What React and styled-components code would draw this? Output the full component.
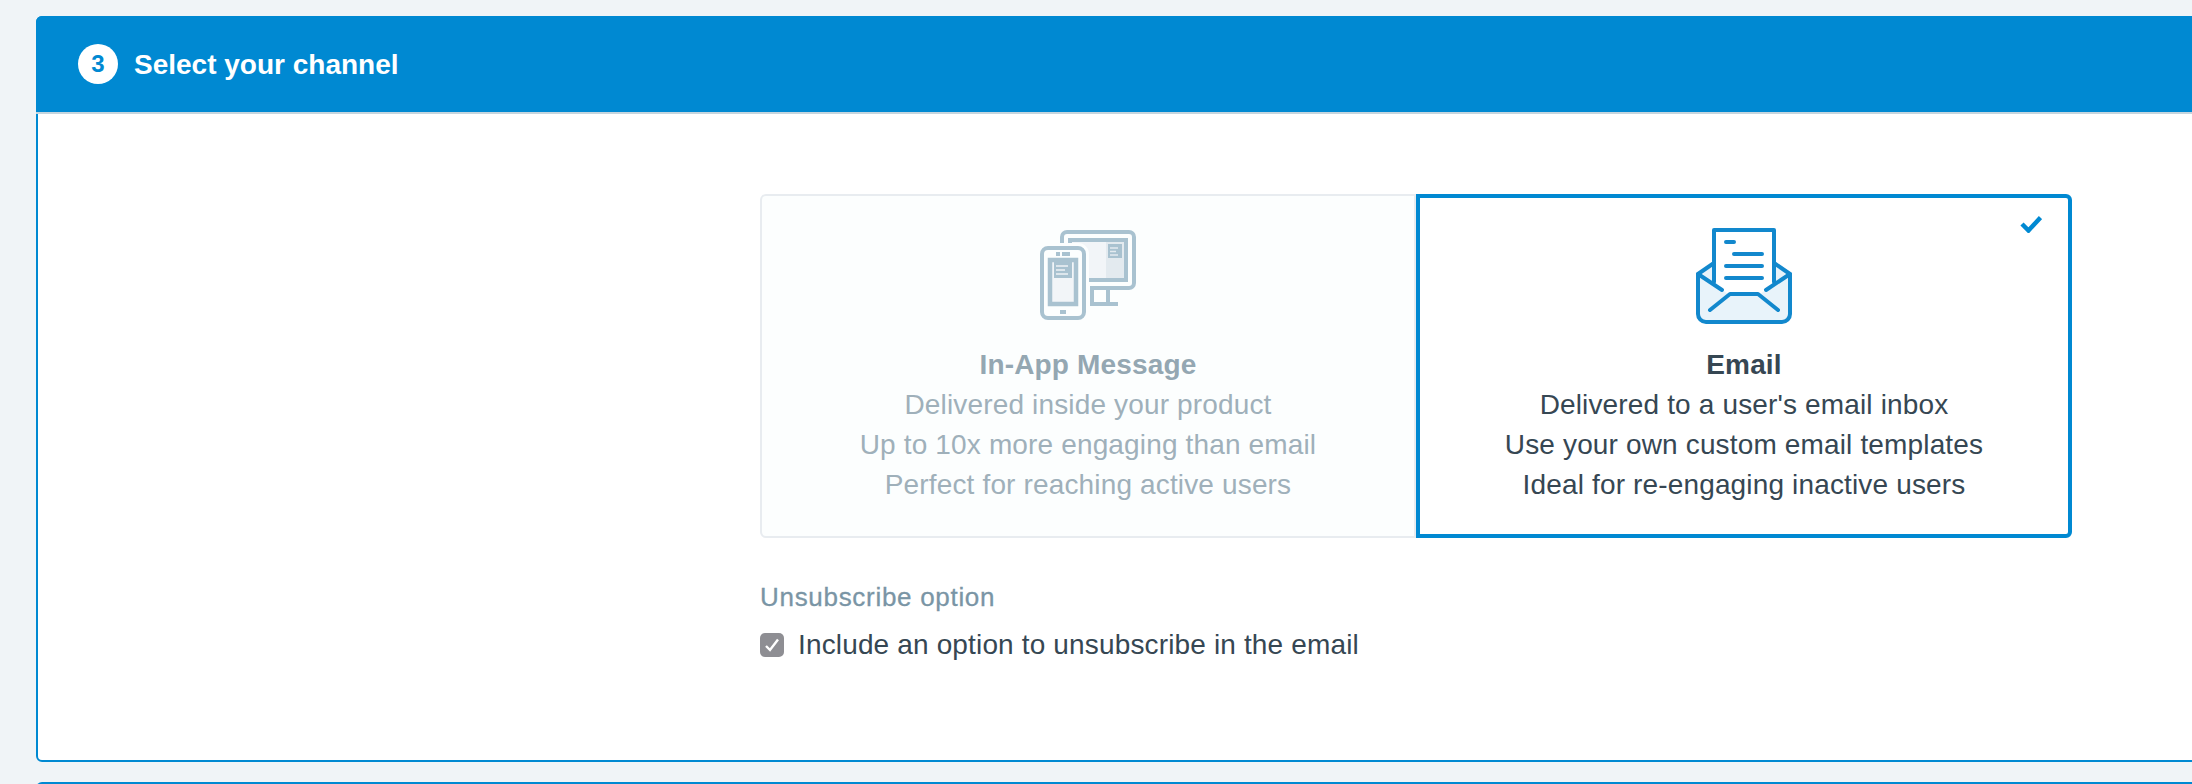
import React from 'react';
import styled, { createGlobalStyle } from 'styled-components';

const GlobalStyle = createGlobalStyle`
  html, body {
    margin: 0;
    height: 100%;
    overflow: hidden;
    background: #f0f4f7;
    font-family: "Liberation Sans", Arial, sans-serif;
  }
`;

const Page = styled.div`
  padding: 16px 0 0 36px;
  display: flex;
  flex-direction: column;
  gap: 20px;
`;

const Panel = styled.section`
  margin-right: -10px;
  background: #fff;
  border: 2px solid #0089d2;
  border-radius: 6px;
  box-sizing: border-box;
`;

const PanelHeader = styled.header`
  height: 98px;
  margin: -2px -2px 0;
  padding: 0 42px;
  box-sizing: border-box;
  background: #0089d2;
  border-bottom: 2px solid #c5d5de;
  border-radius: 6px 6px 0 0;
  display: flex;
  align-items: center;
  gap: 16px;
`;

const StepNumber = styled.span`
  width: 40px;
  height: 40px;
  border-radius: 50%;
  background: #fff;
  color: #0089d2;
  font-size: 24px;
  font-weight: 700;
  display: flex;
  align-items: center;
  justify-content: center;
`;

const PanelTitle = styled.h2`
  margin: 2px 0 0;
  color: #fff;
  font-size: 28px;
  font-weight: 700;
`;

const PanelBody = styled.div`
  height: 646px;
  padding: 80px 0 0 722px;
  box-sizing: border-box;
`;

const Cards = styled.div`
  display: flex;
  width: 1312px;
`;

const Card = styled.div`
  position: relative;
  width: 656px;
  height: 344px;
  box-sizing: border-box;
  padding-top: ${p => (p.$selected ? '30px' : '32px')};
  text-align: center;
  font-size: 28px;
  line-height: 40px;
  letter-spacing: 0.15px;
  color: ${p => (p.$selected ? '#364753' : '#9fb0ba')};
  background: ${p => (p.$selected ? '#fff' : '#fcfefe')};
  border: ${p => (p.$selected ? '4px solid #0089d2' : '2px solid #e8ecf0')};
  border-radius: ${p => (p.$selected ? '0 6px 6px 0' : '6px 0 0 6px')};
`;

const IconSlot = styled.div`
  height: 96px;
  margin-bottom: 21px;
  display: flex;
  justify-content: center;
  align-items: flex-start;
  svg {
    display: block;
    margin: ${p => (p.$nudge ? '2px 0 0 2px' : '0')};
  }
`;

const CardTitle = styled.div`
  font-weight: 700;
  color: ${p => (p.$selected ? '#364753' : '#94a7b2')};
`;

const CheckMark = styled.svg`
  position: absolute;
  top: 17px;
  right: 26px;
`;

const OptionLabel = styled.div`
  margin-top: 44px;
  font-size: 26px;
  line-height: 30px;
  letter-spacing: 0.7px;
  -webkit-text-stroke: 0.3px #7a95a5;
  color: #7a95a5;
`;

const OptionRow = styled.label`
  margin-top: 17px;
  display: flex;
  align-items: center;
  gap: 14px;
  font-size: 28px;
  line-height: 32px;
  letter-spacing: 0.15px;
  color: #364753;
`;

const FakeCheckbox = styled.span`
  width: 24px;
  height: 24px;
  border-radius: 5px;
  background: #8e8e93;
  display: flex;
  align-items: center;
  justify-content: center;
`;

const NextPanel = styled.div`
  height: 40px;
  margin-right: -10px;
  background: #0089d2;
  border-radius: 6px 6px 0 0;
`;

const DevicesIcon = () => (
  <svg width="98" height="92" viewBox="0 0 98 92" fill="none">
    <path d="M22 14V7a5 5 0 0 1 5-5h62a5 5 0 0 1 5 5v46a5 5 0 0 1-5 5H50" stroke="#a9c2d0" strokeWidth="4" />
    <rect x="30" y="10" width="56" height="40" fill="#f2f5f8" stroke="#a9c2d0" strokeWidth="4" />
    <rect x="66" y="12" width="18" height="36" fill="#e3eaef" />
    <rect x="68" y="14" width="14" height="14" fill="#a9c2d0" />
    <path d="M70 18h8M70 21.500h6M70 25h8" stroke="#e3eaef" strokeWidth="1.3" />
    <path d="M52 58v16h26M68 58v16" stroke="#a9c2d0" strokeWidth="4" />
    <rect x="2" y="18" width="42" height="70" rx="6" fill="#fcfefe" stroke="#fcfefe" strokeWidth="10" />
    <rect x="2" y="18" width="42" height="70" rx="6" fill="#fcfefe" stroke="#a9c2d0" strokeWidth="4" />
    <rect x="10" y="30" width="26" height="44" fill="#f2f5f8" stroke="#a9c2d0" strokeWidth="4.500" />
    <rect x="14" y="32" width="18" height="16" fill="#a9c2d0" />
    <path d="M16 36h12M16 40h9M16 44h12" stroke="#eef2f5" strokeWidth="1.4" />
    <path d="M16 22h4v4h-4zM22 22h8v4h-8zM20 80h6v4h-6z" fill="#a9c2d0" />
  </svg>
);

const EmailIcon = () => (
  <svg width="96" height="96" viewBox="0 0 96 96" fill="none" strokeLinecap="round" strokeLinejoin="round">
    <path d="M2 46 18 35h60l16 11v40a8 8 0 0 1-8 8H10a8 8 0 0 1-8-8z" fill="#e8f3fa" stroke="#1288cd" strokeWidth="4" />
    <path d="M18 56V2h60v54l-14 10H32z" fill="#fff" />
    <path d="M18 54V2h60v52" stroke="#1288cd" strokeWidth="4" />
    <path d="M2 46 26 62M94 46 70 62M14 82 34 66h28l20 16" stroke="#1288cd" strokeWidth="4" />
    <path d="M30 14h8M38 26h28M30 38h36M30 50h36" stroke="#1288cd" strokeWidth="4" />
  </svg>
);

const App = () => (
  <Page>
    <GlobalStyle />
    <Panel>
      <PanelHeader>
        <StepNumber>3</StepNumber>
        <PanelTitle>Select your channel</PanelTitle>
      </PanelHeader>
      <PanelBody>
        <Cards>
          <Card>
            <IconSlot $nudge><DevicesIcon /></IconSlot>
            <CardTitle>In-App Message</CardTitle>
            <div>Delivered inside your product</div>
            <div>Up to 10x more engaging than email</div>
            <div>Perfect for reaching active users</div>
          </Card>
          <Card $selected>
            <CheckMark width="22" height="18" viewBox="0 0 22 18" fill="none">
              <path d="M2 9l6.500 6.500L20.500 2.500" stroke="#0089d2" strokeWidth="4.500" />
            </CheckMark>
            <IconSlot><EmailIcon /></IconSlot>
            <CardTitle $selected>Email</CardTitle>
            <div>Delivered to a user's email inbox</div>
            <div>Use your own custom email templates</div>
            <div>Ideal for re-engaging inactive users</div>
          </Card>
        </Cards>
        <OptionLabel>Unsubscribe option</OptionLabel>
        <OptionRow>
          <FakeCheckbox>
            <svg width="16" height="14" viewBox="0 0 16 14" fill="none">
              <path d="M2 8l4 4 8-10.500" stroke="#fff" strokeWidth="2.4" />
            </svg>
          </FakeCheckbox>
          Include an option to unsubscribe in the email
        </OptionRow>
      </PanelBody>
    </Panel>
    <NextPanel />
  </Page>
);

export default App;
